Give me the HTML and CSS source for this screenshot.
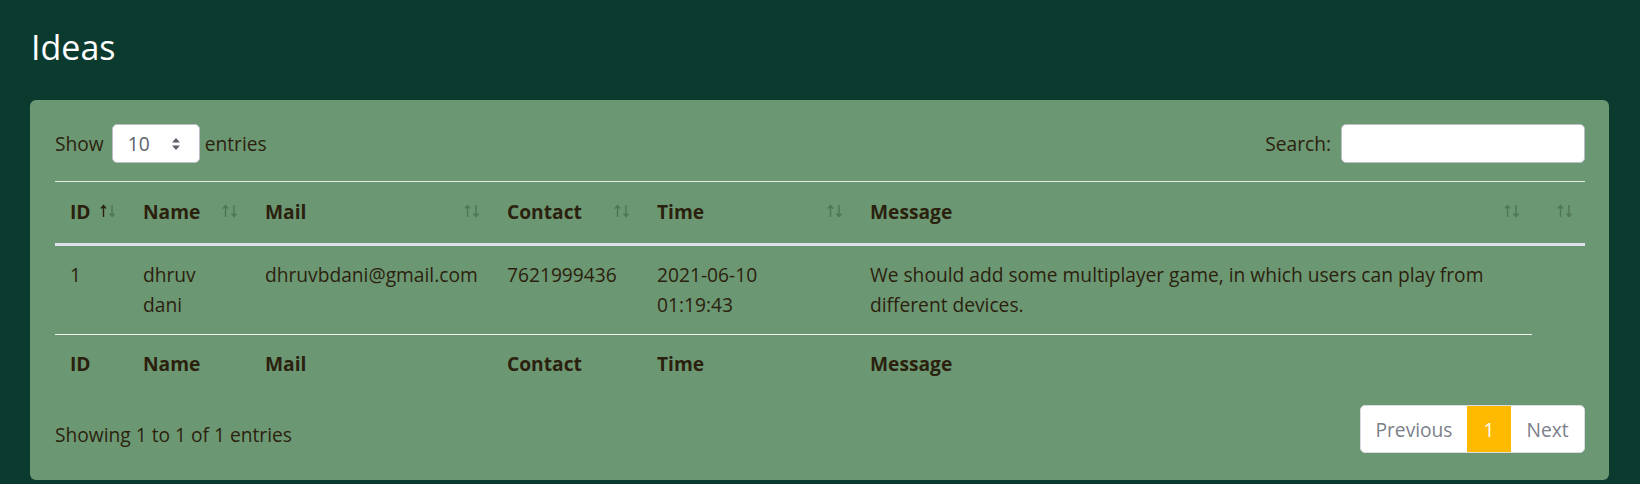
FILE: index.html
```html
<!DOCTYPE html>
<html lang="en">
<head>
<meta charset="utf-8">
<title>Ideas</title>
<link rel="stylesheet" href="styles.css">
</head>
<body>
<div class="page">
  <h1 class="title">Ideas</h1>
  <div class="card">
    <div class="controls">
      <label class="length">Show
        <span class="select">10
          <svg class="caret" width="10" height="14" viewBox="0 0 10 14"><path d="M5 1 L9 5.5 H1 Z M5 13 L9 8.5 H1 Z" fill="#5b6068"/></svg>
        </span>
        entries</label>
      <label class="search">Search: <span class="input"></span></label>
    </div>
    <table class="grid">
      <colgroup>
        <col class="c-id"><col class="c-name"><col class="c-mail"><col class="c-contact"><col class="c-time"><col class="c-msg"><col class="c-extra">
      </colgroup>
      <thead>
        <tr>
          <th class="sort active">ID<span class="arrows"><svg width="18" height="14" viewBox="0 0 18 14"><path class="up" d="M4.5 13 V1.5 M2 4.5 L4.5 1.5 L7 4.5"/><path class="down" d="M13 1 V12.5 M10.5 9.5 L13 12.5 L15.5 9.5"/></svg></span></th>
          <th class="sort">Name<span class="arrows"><svg width="18" height="14" viewBox="0 0 18 14"><path class="up" d="M4.5 13 V1.5 M2 4.5 L4.5 1.5 L7 4.5"/><path class="down" d="M13 1 V12.5 M10.5 9.5 L13 12.5 L15.5 9.5"/></svg></span></th>
          <th class="sort">Mail<span class="arrows"><svg width="18" height="14" viewBox="0 0 18 14"><path class="up" d="M4.5 13 V1.5 M2 4.5 L4.5 1.5 L7 4.5"/><path class="down" d="M13 1 V12.5 M10.5 9.5 L13 12.5 L15.5 9.5"/></svg></span></th>
          <th class="sort">Contact<span class="arrows"><svg width="18" height="14" viewBox="0 0 18 14"><path class="up" d="M4.5 13 V1.5 M2 4.5 L4.5 1.5 L7 4.5"/><path class="down" d="M13 1 V12.5 M10.5 9.5 L13 12.5 L15.5 9.5"/></svg></span></th>
          <th class="sort">Time<span class="arrows"><svg width="18" height="14" viewBox="0 0 18 14"><path class="up" d="M4.5 13 V1.5 M2 4.5 L4.5 1.5 L7 4.5"/><path class="down" d="M13 1 V12.5 M10.5 9.5 L13 12.5 L15.5 9.5"/></svg></span></th>
          <th class="sort">Message<span class="arrows"><svg width="18" height="14" viewBox="0 0 18 14"><path class="up" d="M4.5 13 V1.5 M2 4.5 L4.5 1.5 L7 4.5"/><path class="down" d="M13 1 V12.5 M10.5 9.5 L13 12.5 L15.5 9.5"/></svg></span></th>
          <th class="sort"><span class="arrows"><svg width="18" height="14" viewBox="0 0 18 14"><path class="up" d="M4.5 13 V1.5 M2 4.5 L4.5 1.5 L7 4.5"/><path class="down" d="M13 1 V12.5 M10.5 9.5 L13 12.5 L15.5 9.5"/></svg></span></th>
        </tr>
      </thead>
      <tbody>
        <tr>
          <td>1</td>
          <td>dhruv dani</td>
          <td>dhruvbdani@gmail.com</td>
          <td>7621999436</td>
          <td><span class="part">2021-06-10</span> <span class="part">01:19:43</span></td>
          <td>We should add some multiplayer game, in which users can play from different devices.</td>
        </tr>
      </tbody>
      <tfoot>
        <tr>
          <th>ID</th>
          <th>Name</th>
          <th>Mail</th>
          <th>Contact</th>
          <th>Time</th>
          <th>Message</th>
        </tr>
      </tfoot>
    </table>
    <div class="bottom">
      <div class="info">Showing 1 to 1 of 1 entries</div>
      <div class="pager">
        <span class="pg prev">Previous</span>
        <span class="pg current">1</span>
        <span class="pg next">Next</span>
      </div>
    </div>
  </div>
</div>
</body>
</html>
```

FILE: styles.css
```css
* { box-sizing: border-box; }

body {
  margin: 0;
  background: #0b3a2e;
  font-family: "Open Sans", "Noto Sans", "Liberation Sans", sans-serif;
  font-size: 19.2px;
  color: #2b1f0e;
}

.page {
  padding: 0 31px 0 30px;
  height: 484px;
}

.title {
  margin: 0 0 29px 0;
  padding-top: 23px;
  font-size: 34px;
  line-height: 48px;
  font-weight: 400;
  color: #ffffff;
  padding-left: 1px;
}

.card {
  background: #6c9773;
  border-radius: 6px;
  padding: 24px 24px 27px 25px;
}

.controls {
  display: flex;
  justify-content: space-between;
  align-items: center;
  height: 39px;
}

.length, .search {
  display: flex;
  align-items: center;
  gap: 5px;
  line-height: 30px;
}

.search { gap: 7px; }

.select {
  position: relative;
  display: inline-flex;
  align-items: center;
  width: 88px;
  height: 39px;
  padding-left: 15px;
  background: #ffffff;
  border: 1px solid #b9bec6;
  border-radius: 5px;
  color: #5d636b;
  margin: 0 0 0 3px;
}

.caret {
  position: absolute;
  right: 18px;
  top: 12px;
}

.input {
  display: inline-block;
  width: 244px;
  height: 39px;
  background: #ffffff;
  border: 1px solid #b9bec6;
  border-radius: 5px;
  margin-left: 3px;
}

.grid {
  width: 100%;
  margin-top: 18px;
  border-collapse: collapse;
  table-layout: fixed;
  line-height: 30px;
}

.c-id { width: 73px; }
.c-name { width: 122px; }
.c-mail { width: 242px; }
.c-contact { width: 150px; }
.c-time { width: 213px; }
.c-msg { width: 677px; }
.c-extra { width: 53px; }

.grid thead th {
  position: relative;
  text-align: left;
  font-weight: 700;
  padding: 15px 15px 16px 15px;
  border-top: 1px solid #e4ece5;
  border-bottom: 3px solid #dfe2ea;
  white-space: nowrap;
}

.arrows {
  position: absolute;
  right: 11px;
  top: 22px;
  width: 18px;
  height: 14px;
  display: block;
}

.arrows svg { display: block; }

.arrows path {
  fill: none;
  stroke: #4f7655;
  stroke-width: 1.4;
}

.active .arrows .up { stroke: #2b1f0e; }

.grid tbody td {
  padding: 14px 15px;
  vertical-align: top;
  border-bottom: 1px solid #eef1ee;
  font-weight: 400;
}

.part { display: block; }

.grid tfoot th {
  text-align: left;
  font-weight: 700;
  padding: 14px 15px;
}

.bottom {
  display: flex;
  justify-content: space-between;
  align-items: flex-start;
  margin-top: 12px;
}

.info {
  padding-top: 15px;
  line-height: 30px;
}

.pager {
  display: flex;
  height: 48px;
  background: #ffffff;
  border: 1px solid #d9dde3;
  border-radius: 5px;
  overflow: hidden;
}

.pg {
  display: flex;
  align-items: center;
  justify-content: center;
  color: #7b7f8a;
  height: 100%;
}

.prev { width: 106px; }
.current { width: 44px; background: #ffba00; color: #ffffff; }
.next { width: 73px; }
```
